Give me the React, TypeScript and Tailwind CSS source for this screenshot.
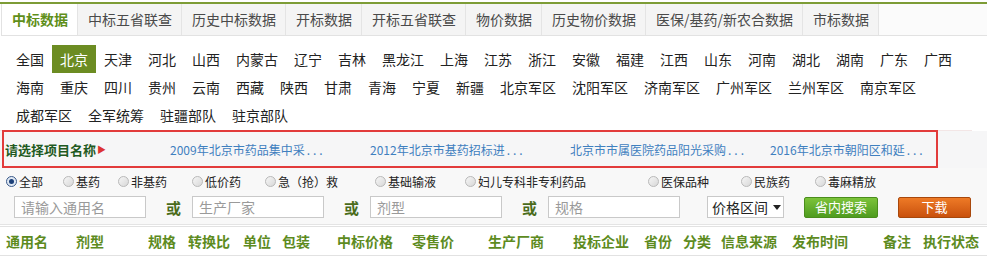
import React from 'react';

const tabs = ['中标数据', '中标五省联查', '历史中标数据', '开标数据', '开标五省联查', '物价数据', '历史物价数据', '医保/基药/新农合数据', '市标数据'];

const regions = [
  '全国', '北京', '天津', '河北', '山西', '内蒙古', '辽宁', '吉林', '黑龙江', '上海', '江苏', '浙江', '安徽', '福建', '江西', '山东', '河南', '湖北', '湖南', '广东', '广西',
  '海南', '重庆', '四川', '贵州', '云南', '西藏', '陕西', '甘肃', '青海', '宁夏', '新疆', '北京军区', '沈阳军区', '济南军区', '广州军区', '兰州军区', '南京军区',
  '成都军区', '全军统筹', '驻疆部队', '驻京部队',
];

const projects = ['2009年北京市药品集中采', '2012年北京市基药招标进', '北京市市属医院药品阳光采购', '2016年北京市朝阳区和延'];

const radios = [
  { label: '全部', w: 'w-[57px]', checked: true },
  { label: '基药', w: 'w-[55px]' },
  { label: '非基药', w: 'w-[74px]' },
  { label: '低价药', w: 'w-[73px]' },
  { label: '急（抢）救', w: 'w-[110px]' },
  { label: '基础输液', w: 'w-[90px]' },
  { label: '妇儿专科非专利药品', w: 'w-[183px]' },
  { label: '医保品种', w: 'w-[93px]' },
  { label: '民族药', w: 'w-[74px]' },
  { label: '毒麻精放', w: 'w-[80px]' },
];

const columns = [
  { label: '通用名', w: 'w-[70px]' },
  { label: '剂型', w: 'w-[72px]' },
  { label: '规格', w: 'w-[40px]' },
  { label: '转换比', w: 'w-[55px]' },
  { label: '单位', w: 'w-[39px]' },
  { label: '包装', w: 'w-[55px]' },
  { label: '中标价格', w: 'w-[75px]' },
  { label: '零售价', w: 'w-[76px]' },
  { label: '生产厂商', w: 'w-[85px]' },
  { label: '投标企业', w: 'w-[71px]' },
  { label: '省份', w: 'w-[39px]' },
  { label: '分类', w: 'w-[38px]' },
  { label: '信息来源', w: 'w-[71px]' },
  { label: '发布时间', w: 'w-[91px]' },
  { label: '备注', w: 'w-[40px]' },
  { label: '执行状态', w: 'w-[60px]' },
];

const Or = () => (
  <div className="w-[46px] pl-[20px] text-[15px] font-bold text-[#4a6b1a] leading-none">或</div>
);

const SearchInput = ({ placeholder }: { placeholder: string }) => (
  <div className="w-[132px] h-[22px] border border-[#c9c9c9] bg-white flex items-center pl-[6px] text-[14px] text-[#9a9a9a]">
    {placeholder}
  </div>
);

export default function App() {
  return (
    <div
      className="w-[987px] h-[262px] overflow-hidden bg-white text-[#222] relative"
      style={{ fontFamily: '"Noto Sans CJK SC", "Noto Sans", sans-serif' }}
    >
      <div className="pt-[2px]">
        <div className="h-[2px] bg-[#7d9c36]" />
        {/* Tabs */}
        <div className="flex h-[32px] border-b border-[#e2e2e2] border-l ml-[1px] bg-[#fbfbfb]">
          {tabs.map((t, i) => (
            <div
              key={t}
              className={`flex items-center pl-[10px] pr-[9px] border-r border-[#e4e4e4] text-[14px] ${
                i === 0 ? 'bg-white text-[#5f8f1a] font-bold' : 'bg-[#f4f4f4] text-[#4a4a4a]'
              }`}
            >
              {t}
            </div>
          ))}
        </div>
      </div>

      {/* Regions */}
      <div className="flex flex-wrap w-[972px] pl-[8px] pt-[9px] pb-[1px] border-b border-[#f3e6e6]">
        {regions.map((r) => (
          <div
            key={r}
            className={`h-[28px] px-[8px] flex items-center text-[14px] ${
              r === '北京' ? 'bg-[#6c8c22] text-white' : 'text-[#222]'
            }`}
          >
            {r}
          </div>
        ))}
      </div>

      {/* Projects */}
      <div className="h-[37px] flex items-center bg-[#f6f6f7]">
        <div className="w-[170px] pl-[5px] flex items-center">
          <span className="text-[13px] font-bold text-[#1f5a22]">请选择项目名称</span>
          <span className="text-[#d33] text-[9px] leading-none ml-[1px]">▶</span>
        </div>
        {projects.map((p) => (
          <div key={p} className="w-[200px] text-[12px] text-[#3f80bf] whitespace-nowrap">
            {p}
            <span className="tracking-[3px] ml-[2px]">...</span>
          </div>
        ))}
      </div>

      {/* Filters */}
      <div className="bg-[#f8f8f8] border-b border-[#e4e4e4] pb-[5px]">
        <div className="flex items-center h-[27px] pl-[6px] text-[12px] text-[#222]">
          {radios.map((r) => (
            <div key={r.label} className={`${r.w} flex items-center`}>
              <span
                className={`w-[11px] h-[11px] rounded-full border mr-[2px] flex items-center justify-center ${
                  r.checked ? 'border-[#3b5a8a] bg-[#dfe8f3]' : 'border-[#b9b9b9] bg-gradient-to-br from-[#f6f6f6] to-[#d8d8d8]'
                }`}
              >
                {r.checked && <span className="w-[5px] h-[5px] rounded-full bg-[#1b3f78]" />}
              </span>
              {r.label}
            </div>
          ))}
        </div>
        <div className="flex items-center h-[24px] pl-[14px]">
          <SearchInput placeholder="请输入通用名" />
          <Or />
          <SearchInput placeholder="生产厂家" />
          <Or />
          <SearchInput placeholder="剂型" />
          <Or />
          <SearchInput placeholder="规格" />
          <div className="ml-[27px] w-[77px] h-[22px] border border-[#c9c9c9] bg-white flex items-center pl-[4px] text-[14px] text-[#222]">
            价格区间
            <svg className="ml-[5px] w-[8px] h-[5px]" viewBox="0 0 8 5">
              <path d="M0 0h8L4 5z" fill="#222" />
            </svg>
          </div>
          <div className="ml-[20px] w-[74px] h-[21px] rounded-[2px] border border-[#4a8d1c] bg-gradient-to-b from-[#7cc33a] to-[#4e9c1f] text-white text-[13px] flex items-center justify-center">
            省内搜索
          </div>
          <div className="ml-[20px] w-[73px] h-[21px] rounded-[2px] border border-[#a8480c] bg-gradient-to-b from-[#ee7a26] to-[#c9510c] text-white text-[13px] flex items-center justify-center">
            下载
          </div>
        </div>
      </div>

      {/* Table header */}
      <div className="flex items-center h-[30px] mt-[1px] border-t border-b border-[#e2e2e2] pl-[6px] bg-white">
        {columns.map((c) => (
          <div key={c.label} className={`${c.w} text-[14px] font-bold text-[#5d8b1e] whitespace-nowrap`}>
            {c.label}
          </div>
        ))}
      </div>

      {/* Annotation box */}
      <div className="absolute left-[2px] top-[130px] w-[936px] h-[38px] border-2 border-[#e23b3b]" />
    </div>
  );
}
